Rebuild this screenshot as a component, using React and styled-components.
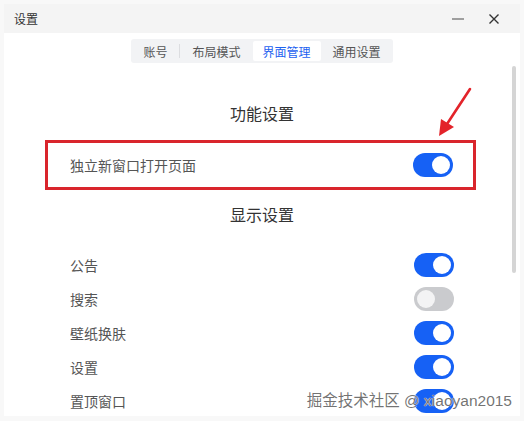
import React from "react";
import styled, { createGlobalStyle } from "styled-components";

const Global = createGlobalStyle`
  html, body { margin: 0; padding: 0; background: #f8f8f8; }
  body { font-family: "Noto Sans CJK SC", "Noto Sans", sans-serif; }
  * { box-sizing: border-box; }
`;

const Page = styled.div`
  width: 524px;
  height: 421px;
  padding: 4px 4px 5px 4px;
`;

const Window = styled.div`
  position: relative;
  width: 516px;
  height: 412px;
  display: flex;
  flex-direction: column;
  background: #ffffff;
`;

const TitleBar = styled.div`
  height: 29px;
  flex: none;
  display: flex;
  align-items: center;
  padding: 0 14px 0 10px;
  background: #f4f4f4;
`;

const TitleText = styled.div`
  flex: 1;
  font-size: 12px;
  color: #333;
`;

const WinBtn = styled.div`
  width: 24px;
  height: 24px;
  display: flex;
  align-items: center;
  justify-content: center;
  margin-left: 12px;
`;

const Body = styled.div`
  flex: 1;
  min-height: 0;
  overflow: hidden;
  display: flex;
  flex-direction: column;
  align-items: stretch;
  & > * { flex-shrink: 0; }
`;

const TabBar = styled.div`
  align-self: center;
  margin-top: 6px;
  display: flex;
  align-items: center;
  gap: 2px;
  padding: 2px;
  height: 24px;
  background: #f2f3f5;
  border-radius: 3px;
`;

const Tab = styled.div`
  height: 20px;
  padding: 0 10px;
  display: flex;
  align-items: center;
  font-size: 12px;
  color: ${(p) => (p.$active ? "#1d62f0" : "#555")};
  background: ${(p) => (p.$active ? "#ffffff" : "transparent")};
  border-radius: 2px;
`;

const TabDivider = styled.div`
  width: 1px;
  height: 14px;
  background: ${(p) => (p.$hidden ? "transparent" : "#dcdde0")};
`;

const SectionTitle = styled.div`
  text-align: center;
  font-size: 16px;
  line-height: 20px;
  color: #333;
  margin-top: ${(p) => p.$top}px;
`;

const Highlight = styled.div`
  margin: 17px 44px 0 41px;
  height: 50px;
  border: 3px solid #d9252c;
  padding: 0 20px 0 22px;
  display: flex;
  align-items: center;
  justify-content: space-between;
`;

const RowList = styled.div`
  margin-top: 24px;
  padding: 0 66px;
  display: flex;
  flex-direction: column;
`;

const Row = styled.div`
  height: 34px;
  display: flex;
  align-items: center;
  justify-content: space-between;
`;

const Label = styled.span`
  font-size: 14px;
  color: #555;
`;

const SwitchTrack = styled.div`
  width: 40px;
  height: 24px;
  border-radius: 12px;
  padding: 3px;
  display: flex;
  justify-content: ${(p) => (p.$on ? "flex-end" : "flex-start")};
  background: ${(p) => (p.$on ? "#1661f5" : "#cacbce")};
`;

const Knob = styled.div`
  width: 18px;
  height: 18px;
  border-radius: 50%;
  background: ${(p) => (p.$on ? "#ffffff" : "#f3f3f4")};
`;

const ScrollThumb = styled.div`
  position: absolute;
  right: 4px;
  top: 62px;
  width: 4px;
  height: 207px;
  border-radius: 2px;
  background: #d5d5d5;
`;

const Arrow = styled.svg`
  position: absolute;
  left: 425px;
  top: 80px;
  pointer-events: none;
`;

const Watermark = styled.div`
  position: absolute;
  right: 8px;
  bottom: 5px;
  font-family: "Liberation Sans", "Noto Sans CJK SC", sans-serif;
  font-size: 15.5px;
  line-height: 20px;
  color: rgba(90, 90, 90, 0.85);
  text-shadow: 0 0 1px #fff, 0 0 1px #fff;
  white-space: nowrap;
`;

const Switch = ({ on }) => (
  <SwitchTrack $on={on}>
    <Knob $on={on} />
  </SwitchTrack>
);

const tabs = ["账号", "布局模式", "界面管理", "通用设置"];
const activeTab = 2;

const rows = [
  ["公告", true],
  ["搜索", false],
  ["壁纸换肤", true],
  ["设置", true],
  ["置顶窗口", true],
];

export default function App() {
  return (
    <Page>
      <Global />
      <Window>
        <TitleBar>
          <TitleText>设置</TitleText>
          <WinBtn>
            <svg width="14" height="14" viewBox="0 0 14 14">
              <line x1="1" y1="7" x2="13" y2="7" stroke="#8a8a8a" strokeWidth="1.6" />
            </svg>
          </WinBtn>
          <WinBtn>
            <svg width="12" height="12" viewBox="0 0 12 12">
              <path d="M1.5 1.5 L10.5 10.5 M10.5 1.5 L1.5 10.5" stroke="#333" strokeWidth="1.4" fill="none" />
            </svg>
          </WinBtn>
        </TitleBar>
        <Body>
          <TabBar>
            {tabs.map((t, i) => (
              <React.Fragment key={t}>
                {i === 1 && (
                  <TabDivider $hidden={i === activeTab || i - 1 === activeTab} />
                )}
                <Tab $active={i === activeTab}>{t}</Tab>
              </React.Fragment>
            ))}
          </TabBar>
          <SectionTitle $top={40}>功能设置</SectionTitle>
          <Highlight>
            <Label>独立新窗口打开页面</Label>
            <Switch on />
          </Highlight>
          <SectionTitle $top={14}>显示设置</SectionTitle>
          <RowList>
            {rows.map(([l, on]) => (
              <Row key={l}>
                <Label>{l}</Label>
                <Switch on={on} />
              </Row>
            ))}
          </RowList>
        </Body>
        <ScrollThumb />
        <Arrow width="60" height="60" viewBox="0 0 60 60">
          <line x1="41" y1="5" x2="18" y2="40" stroke="#e3232a" strokeWidth="2.6" strokeLinecap="round" />
          <polygon points="10,52 12,35 25,43" fill="#e3232a" />
        </Arrow>
        <Watermark>掘金技术社区 @ xiaoyan2015</Watermark>
      </Window>
    </Page>
  );
}
